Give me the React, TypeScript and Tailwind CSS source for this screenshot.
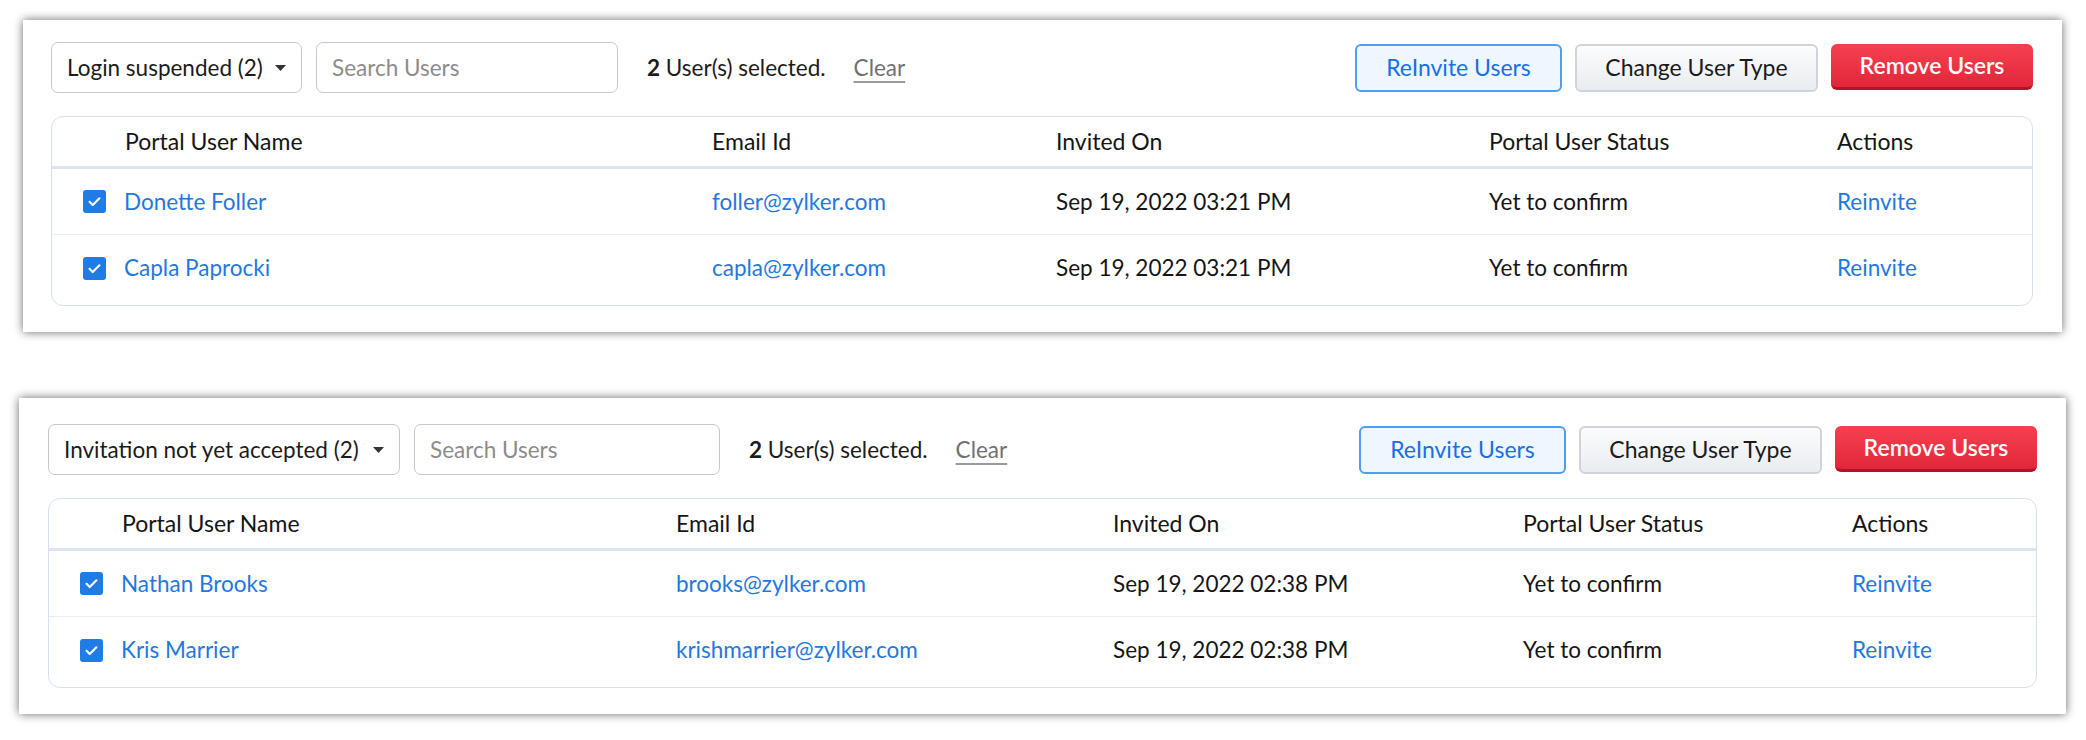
type User = {
    name: string
    email: string
    invited: string
    status: string
}

type PanelProps = {
    filter: string
    users: User[]
    box: string
    dropdown: string
    search: string
    cols: string
}

const Checkbox = () => (
    <span className="flex items-center justify-center w-[23px] h-[23px] rounded-[3px] bg-[#1f7ce6] shrink-0">
        <svg width="17" height="17" viewBox="0 0 24 24" fill="none">
            <path d="M5 12.5l4.5 4.5L19 7.5" stroke="white" strokeWidth="3" strokeLinecap="round" strokeLinejoin="round" />
        </svg>
    </span>
)

const Caret = () => (
    <svg width="11" height="6" viewBox="0 0 11 6" className="ml-auto">
        <path d="M0 0h11L5.5 6z" fill="#333" />
    </svg>
)

const UserPanel = ({ filter, users, box, dropdown, search, cols }: PanelProps) => {
    return (
        <div className={`bg-white shadow-[0_0_9px_rgba(0,0,0,0.6)] flex flex-col ${box}`}>
            {/* toolbar */}
            <div className="flex items-center">
                <div className={`flex items-center h-[51px] border border-[#c4c9d0] rounded-[7px] pl-[15px] pr-[15px] text-[#1b1b1b] ${dropdown}`}>
                    <span>{filter}</span>
                    <Caret />
                </div>
                <div className={`flex items-center h-[51px] ml-[14px] border border-[#c4c9d0] rounded-[7px] pl-[15px] text-[#8c8c8c] ${search}`}>
                    Search Users
                </div>
                <p className="ml-[29px] text-[#1b1b1b]">
                    <span className="font-bold">2</span> User(s) selected.
                </p>
                <span className="ml-[28px] text-[#707070] underline decoration-[#9a9a9a] underline-offset-[5px]">Clear</span>
                <div className="ml-auto flex items-center gap-[13px] text-[23px]">
                    <button className="w-[207px] h-[48px] rounded-[6px] border-2 border-[#4d9ff5] bg-[#eef6ff] text-[#1a6fe6]">ReInvite Users</button>
                    <button className="w-[243px] h-[48px] rounded-[6px] border-2 border-[#d0d4da] bg-gradient-to-b from-[#fbfcfd] to-[#e9ecf0] text-[#1b1b1b]">Change User Type</button>
                    <button className="w-[202px] h-[46px] mb-[2px] rounded-[6px] bg-gradient-to-b from-[#f6404f] to-[#e1263a] border-b-[3px] border-[#b3132a] text-white font-semibold">Remove Users</button>
                </div>
            </div>

            {/* user table */}
            <div className="mt-[23px] border border-[#d6e1ec] rounded-[12px] pb-[4px]">
                <div className={`grid ${cols} items-center h-[52px] border-b-[3px] border-[#dde6ef] text-[#151515] text-[23px]`}>
                    <span className="pl-[73px]">Portal User Name</span>
                    <span>Email Id</span>
                    <span>Invited On</span>
                    <span>Portal User Status</span>
                    <span>Actions</span>
                </div>
                {users.map((u, i) => (
                    <div
                        key={u.email}
                        className={`grid ${cols} items-center h-[66px] ${i < users.length - 1 ? "border-b border-[#e8edf2]" : ""}`}
                    >
                        <span className="flex items-center pl-[31px] gap-[18px] text-[#1f78e0]">
                            <Checkbox />
                            {u.name}
                        </span>
                        <span className="text-[#1f78e0]">{u.email}</span>
                        <span className="text-[#151515]">{u.invited}</span>
                        <span className="text-[#151515]">{u.status}</span>
                        <span className="text-[#1f78e0]">Reinvite</span>
                    </div>
                ))}
            </div>
        </div>
    )
}

const App = () => {
    const suspended: User[] = [
        { name: "Donette Foller", email: "foller@zylker.com", invited: "Sep 19, 2022 03:21 PM", status: "Yet to confirm" },
        { name: "Capla Paprocki", email: "capla@zylker.com", invited: "Sep 19, 2022 03:21 PM", status: "Yet to confirm" },
    ]
    const pending: User[] = [
        { name: "Nathan Brooks", email: "brooks@zylker.com", invited: "Sep 19, 2022 02:38 PM", status: "Yet to confirm" },
        { name: "Kris Marrier", email: "krishmarrier@zylker.com", invited: "Sep 19, 2022 02:38 PM", status: "Yet to confirm" },
    ]

    return (
        <div className="bg-white w-[2086px] h-[740px] pt-[20px] flex flex-col text-[22.5px]" style={{ fontFamily: "Lato, 'Noto Sans', sans-serif" }}>
            <UserPanel
                filter="Login suspended (2)"
                users={suspended}
                box="ml-[23px] w-[2039px] h-[312px] pt-[22px] pl-[28px] pr-[29px]"
                dropdown="w-[251px]"
                search="w-[302px]"
                cols="grid-cols-[660px_344px_433px_348px_1fr]"
            />
            <UserPanel
                filter="Invitation not yet accepted (2)"
                users={pending}
                box="ml-[19px] mt-[66px] w-[2047px] h-[316px] pt-[26px] pl-[29px] pr-[29px]"
                dropdown="w-[352px]"
                search="w-[306px]"
                cols="grid-cols-[627px_437px_410px_329px_1fr]"
            />
        </div>
    )
}

export default App
